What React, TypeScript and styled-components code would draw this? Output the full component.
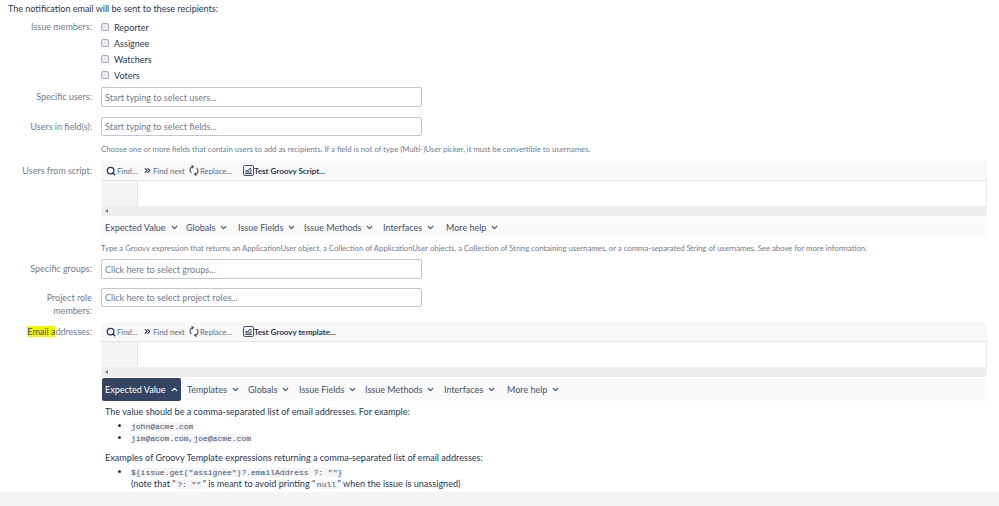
import React from 'react';
import styled, { createGlobalStyle } from 'styled-components';
import { ChevronDown, ChevronUp, ChevronsRight, Search } from 'lucide-react';

const Global = createGlobalStyle`
  html, body {
    margin: 0;
    padding: 0;
    background: #f4f5f7;
    font-family: Lato, "Open Sans", sans-serif;
    font-size: 9px;
    color: #42526e;
  }
`;

const Page = styled.div`
  height: 492px;
  overflow: hidden;
  background: #fff;
  padding: 2px 12px 0 8px;
  box-sizing: border-box;
`;

const Heading = styled.div`
  height: 13px;
  line-height: 13px;
  color: #253858;
  margin-bottom: 4px;
`;

const Row = styled.div<{ $mt?: number }>`
  display: grid;
  grid-template-columns: 84px 1fr;
  column-gap: 9px;
  margin-top: ${(p) => p.$mt ?? 0}px;
`;

const Label = styled.label<{ $pt?: number }>`
  color: #707c90;
  text-align: right;
  line-height: 13px;
  padding-top: ${(p) => p.$pt ?? 0}px;
`;

const Mark = styled.span`
  background: #f5f500;
  color: #42526e;
`;

const Checks = styled.div`
  display: grid;
  grid-auto-rows: 16px;
`;

const CheckRow = styled.div`
  display: flex;
  align-items: center;
  gap: 5px;
  color: #253858;
`;

const Box = styled.span`
  width: 8px;
  height: 8px;
  box-sizing: border-box;
  background: #e9ebee;
  border: 1px solid #a5adba;
  border-radius: 2px;
`;

const Input = styled.div<{ $h?: number }>`
  width: 321px;
  height: ${(p) => p.$h ?? 20}px;
  box-sizing: border-box;
  border: 1px solid #c1c7d0;
  border-radius: 2px;
  padding-left: 3px;
  display: flex;
  align-items: center;
  color: #707c90;
`;

const Hint = styled.div<{ $mt: number }>`
  font-size: 7.75px;
  height: 11px;
  line-height: 11px;
  color: #707c90;
  white-space: nowrap;
  margin-top: ${(p) => p.$mt}px;
`;

const Editor = styled.div`
  width: 886px;
`;

const Toolbar = styled.div`
  height: 20px;
  box-sizing: border-box;
  background: #f8f8f8;
  border-bottom: 1px solid #e4e4e4;
  padding-left: 5px;
  display: flex;
  align-items: center;
  font-size: 7.75px;
  color: #5e6c84;
`;

const Tool = styled.span<{ $w: number }>`
  width: ${(p) => p.$w}px;
  flex: none;
  display: flex;
  align-items: center;
  gap: 1px;
  white-space: nowrap;
`;

const ToolStrong = styled(Tool)`
  font-size: 8px;
  font-weight: 700;
  color: #253858;
  gap: 0;
`;

const Code = styled.div`
  height: 25px;
  display: flex;
  box-sizing: border-box;
  background: #fff;
  border-right: 1px solid #e8e8e8;
`;

const Gutter = styled.div`
  width: 36px;
  background: #f4f4f4;
  border-right: 1px solid #e4e4e4;
`;

const Scrollbar = styled.div`
  height: 10px;
  background: #eeeeee;
  display: flex;
  align-items: center;
  padding-left: 4px;
`;

const ScrollArrow = styled.span`
  width: 0;
  height: 0;
  border-top: 2px solid transparent;
  border-bottom: 2px solid transparent;
  border-right: 3px solid #777;
`;

const MenuBar = styled.div<{ $h: number }>`
  height: ${(p) => p.$h}px;
  background: #fafafa;
  display: flex;
  align-items: center;
  margin-top: 1px;
  padding-left: 1px;
`;

const Menu = styled.span<{ $w: number; $active?: boolean }>`
  width: ${(p) => p.$w}px;
  margin-right: ${(p) => (p.$active ? 3 : 0)}px;
  flex: none;
  height: 23px;
  box-sizing: border-box;
  padding-left: 3px;
  display: flex;
  align-items: center;
  gap: 4px;
  white-space: nowrap;
  border-radius: 2px;
  color: ${(p) => (p.$active ? '#fff' : '#42526e')};
  background: ${(p) => (p.$active ? '#344563' : 'transparent')};
`;

const Help = styled.div`
  padding: 4px 0 0 4px;
  color: #253858;
  font-size: 9.1px;
  line-height: 13px;
`;

const List = styled.ul`
  margin: 2px 0 7px;
  padding: 0 0 0 26px;
  list-style: disc;
  & > li {
    line-height: 12px;
  }
`;

const Mono = styled.code`
  font-family: "Liberation Mono", monospace;
  font-size: 8px;
  line-height: 1;
  background: #f4f5f7;
  color: #42526e;
`;

const InlineMono = styled(Mono)`
  padding: 0 1.5px;
`;

function TestIcon() {
  return (
    <svg width="11" height="11" viewBox="0 0 11 11" fill="none" stroke="#42526e" strokeWidth="1">
      <rect x="0.5" y="0.5" width="10" height="10" rx="1.5" />
      <path d="M2 8.5h7M3 7V5l2 1 2-3 1 1v3z" />
    </svg>
  );
}

function ReplaceIcon() {
  return (
    <svg width="10" height="11" viewBox="0 0 10 11" fill="none" stroke="#42526e" strokeWidth="1.1">
      <path d="M4 1.6C2.2 2 1 3.5 1 5.3c0 1.2.6 2.2 1.4 2.9M6 9.4c1.8-.4 3-1.9 3-3.7 0-1.2-.6-2.2-1.4-2.9" />
      <path d="M2.6 .4 4.4 1.6 3 3.2M7.4 10.6 5.6 9.4 7 7.8" />
    </svg>
  );
}

function EditorBox({ test, children }: { test: string; children: React.ReactNode }) {
  return (
    <Editor>
      <Toolbar>
        <Tool $w={37}>
          <Search size={10} strokeWidth={3} color="#253858" />
          Find...
        </Tool>
        <Tool $w={46}>
          <ChevronsRight size={9} strokeWidth={3} color="#253858" />
          Find next
        </Tool>
        <Tool $w={54}>
          <ReplaceIcon />
          Replace...
        </Tool>
        <ToolStrong $w={120}>
          <TestIcon />
          {test}
        </ToolStrong>
      </Toolbar>
      <Code>
        <Gutter />
      </Code>
      <Scrollbar>
        <ScrollArrow />
      </Scrollbar>
      {children}
    </Editor>
  );
}

function MenuItem({ label, w, active }: { label: string; w: number; active?: boolean }) {
  const Icon = active ? ChevronUp : ChevronDown;
  return (
    <Menu $w={w} $active={active}>
      {label}
      <Icon size={9} strokeWidth={3.5} />
    </Menu>
  );
}

export default function App() {
  return (
    <Page>
      <Global />
      <Heading>The notification email will be sent to these recipients:</Heading>
      <Row>
        <Label $pt={1}>Issue members:</Label>
        <Checks>
          {['Reporter', 'Assignee', 'Watchers', 'Voters'].map((c) => (
            <CheckRow key={c}>
              <Box />
              {c}
            </CheckRow>
          ))}
        </Checks>
      </Row>
      <Row $mt={4}>
        <Label $pt={3}>Specific users:</Label>
        <Input>Start typing to select users...</Input>
      </Row>
      <Row $mt={10}>
        <Label $pt={3}>Users in field(s):</Label>
        <Input $h={19}>Start typing to select fields...</Input>
      </Row>
      <Row>
        <span />
        <Hint $mt={8}>
          Choose one or more fields that contain users to add as recipients. If a field is not of type (Multi-)User picker, it must be convertible to usernames.
        </Hint>
      </Row>
      <Row $mt={6}>
        <Label $pt={3}>Users from script:</Label>
        <EditorBox test="Test Groovy Script...">
          <MenuBar $h={20}>
            <MenuItem label="Expected Value" w={81} />
            <MenuItem label="Globals" w={52} />
            <MenuItem label="Issue Fields" w={66} />
            <MenuItem label="Issue Methods" w={79} />
            <MenuItem label="Interfaces" w={63} />
            <MenuItem label="More help" w={60} />
          </MenuBar>
        </EditorBox>
      </Row>
      <Row>
        <span />
        <Hint $mt={6}>
          Type a Groovy expression that returns an ApplicationUser object, a Collection of ApplicationUser objects, a Collection of String containing usernames, or a comma-separated String of usernames. See above for more information.
        </Hint>
      </Row>
      <Row $mt={5}>
        <Label $pt={3}>Specific groups:</Label>
        <Input>Click here to select groups...</Input>
      </Row>
      <Row $mt={9}>
        <Label $pt={3}>Project role members:</Label>
        <Input $h={19}>Click here to select project roles...</Input>
      </Row>
      <Row $mt={5}>
        <Label $pt={3}>
          <Mark>Email a</Mark>ddresses:
        </Label>
        <EditorBox test="Test Groovy template...">
          <MenuBar $h={23}>
            <MenuItem label="Expected Value" w={79} active />
            <MenuItem label="Templates" w={61} />
            <MenuItem label="Globals" w={51} />
            <MenuItem label="Issue Fields" w={66} />
            <MenuItem label="Issue Methods" w={79} />
            <MenuItem label="Interfaces" w={63} />
            <MenuItem label="More help" w={60} />
          </MenuBar>
          <Help>
            The value should be a comma-separated list of email addresses. For example:
            <List>
              <li><Mono>john@acme.com</Mono></li>
              <li><Mono>jim@acom.com,joe@acme.com</Mono></li>
            </List>
            Examples of Groovy Template expressions returning a comma-separated list of email addresses:
            <List>
              <li>
                <Mono>{'${issue.get("assignee")?.emailAddress ?: ""}'}</Mono>
                <br />
                (note that "<InlineMono>?: ""</InlineMono>" is meant to avoid printing "<InlineMono>null</InlineMono>" when the issue is unassigned)
              </li>
            </List>
          </Help>
        </EditorBox>
      </Row>
    </Page>
  );
}
